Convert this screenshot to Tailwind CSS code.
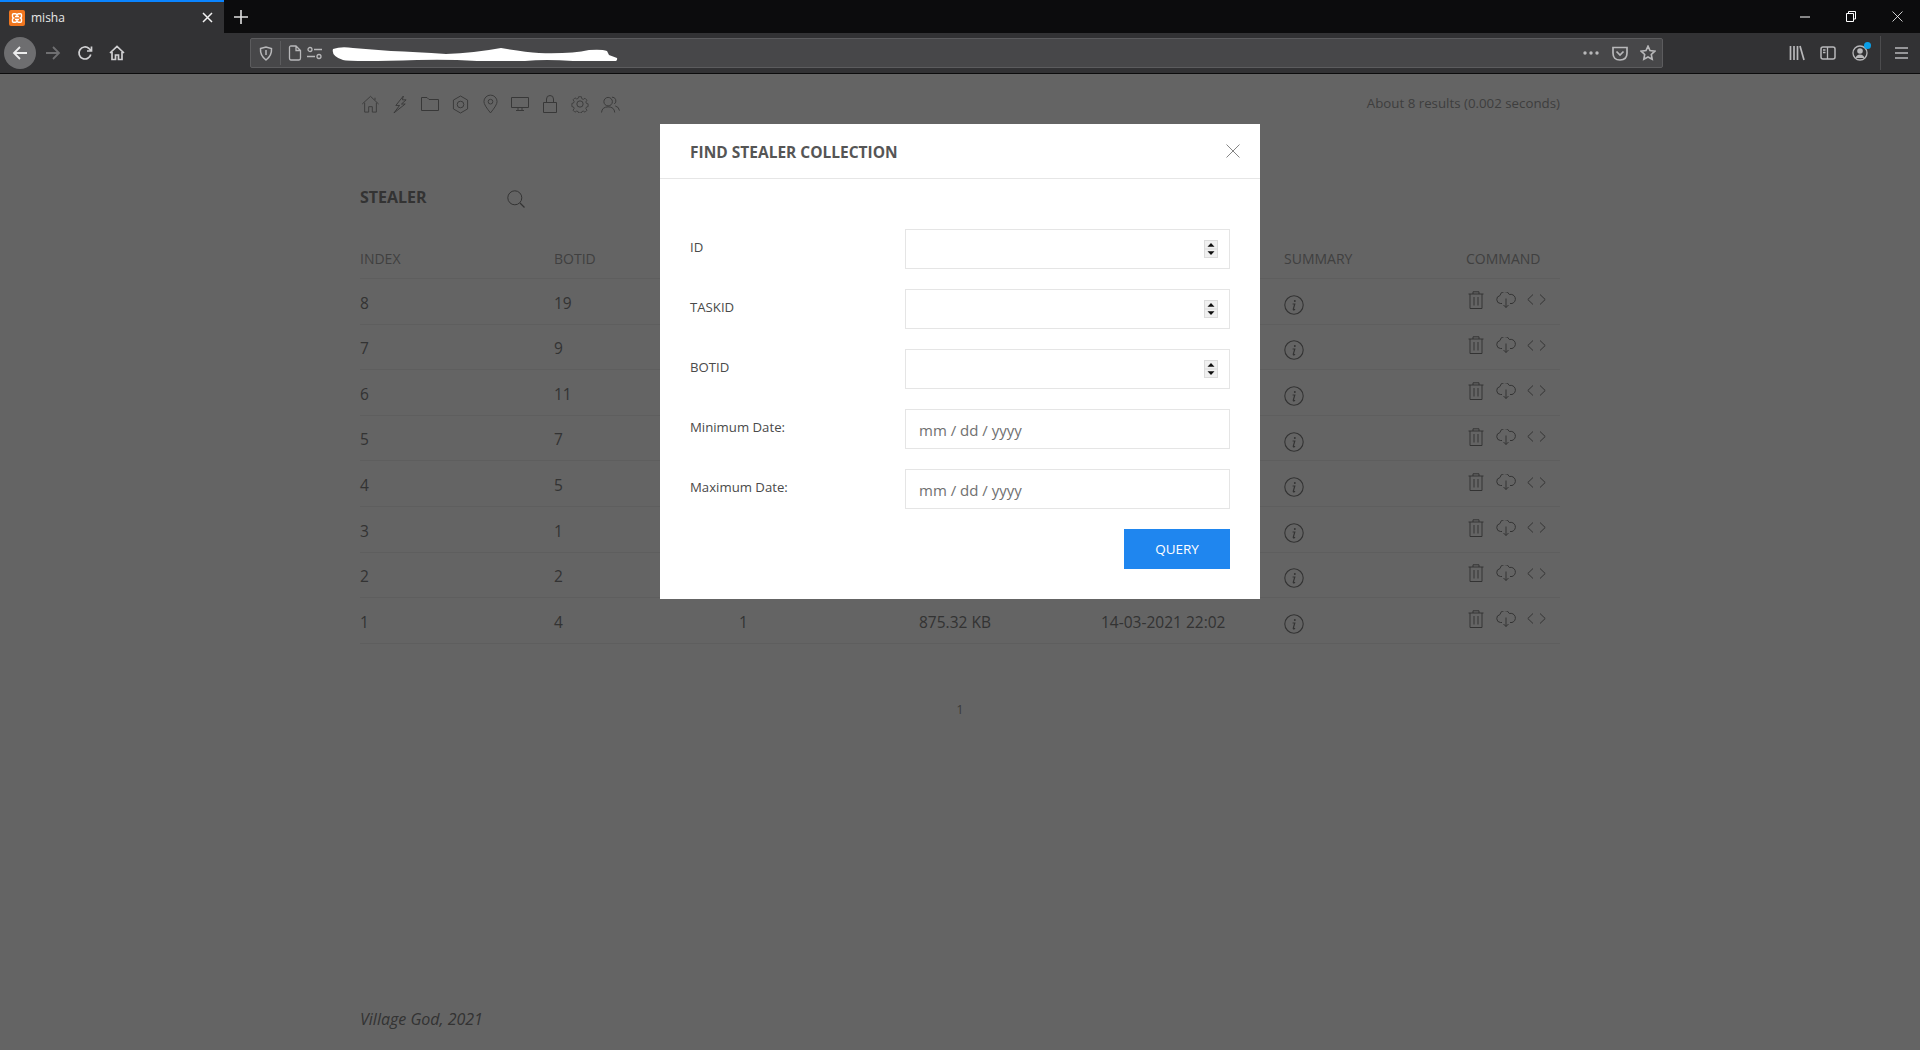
<!DOCTYPE html>
<html lang="en">
<head>
  <meta charset="UTF-8" />
  <title>misha</title>
  <script src="https://cdn.jsdelivr.net/npm/@tailwindcss/browser@4"></script>
</head>
<body class="font-['Open_Sans',sans-serif] overflow-hidden">
  <!-- shared row icons -->
  <svg class="hidden">
    <symbol id="i-info" viewBox="0 0 20 20"><circle cx="10" cy="10" r="9.200" fill="none" stroke="currentColor" stroke-width="1.100"/><circle cx="10.800" cy="5.900" r="1" fill="currentColor"/><path d="M8.600 9h2.200l-1.500 5.200q-.2.900.7.700l1.100-.6" fill="none" stroke="currentColor" stroke-width="1.200"/></symbol>
    <symbol id="i-trash" viewBox="0 0 16 18"><path d="M.5 3h15M5 3V.8h6V3M2 3v14.500h12V3M6 6v8.500M10 6v8.500" fill="none" stroke="currentColor"/></symbol>
    <symbol id="i-cloud" viewBox="0 0 20 16"><path d="M6 11.500H4.500a4 4 0 0 1-.6-7.900 5 5 0 0 1 9.500-1.100 4.500 4.500 0 0 1 2.600 9H14M10 6.500v9M7.500 13l2.500 2.500 2.500-2.500" fill="none" stroke="currentColor"/></symbol>
    <symbol id="i-code" viewBox="0 0 19 11"><path d="M6 .5 .8 5.500 6 10.500M13 .5l5.200 5L13 10.500" fill="none" stroke="currentColor"/></symbol>
    <symbol id="i-spin" viewBox="0 0 14 18"><rect width="14" height="18" fill="#dcdcdc"/><rect x="1" y="1" width="12" height="7.500" fill="#f0f0f0"/><rect x="1" y="9.500" width="12" height="7.500" fill="#f0f0f0"/><path d="M7 3l3.500 3.800h-7zM7 15l3.500-3.800h-7z" fill="#111"/></symbol>
  </svg>

  <div class="flex flex-col h-[1050px] w-[1920px]">
    <!-- browser tab strip -->
    <div class="flex h-[33px] shrink-0 bg-[#0c0c0d] text-white">
      <div class="flex items-center w-[224px] h-[33px] bg-[#323234] border-t-2 border-[#0a84ff] pl-[9px] pr-[11px]">
        <svg class="w-4 h-4 shrink-0" viewBox="0 0 16 16"><rect width="16" height="16" rx="2" fill="#f0761f"/><path d="M4.500 3.800h2q1 0 1.500 1.500.5-1.500 1.500-1.500h2q1 0 1 1v1.700q0 1-1 1.500 1 .5 1 1.500v1.700q0 1-1 1h-2q-1 0-1.500-1.500-.5 1.500-1.500 1.500h-2q-1 0-1-1V9.500q0-1 1-1.500-1-.5-1-1.500V4.800q0-1 1-1zM6 6.500h4M6 9.500h4" fill="none" stroke="#fff" stroke-width="1.400"/></svg>
        <span class="ml-[6px] text-[12px] leading-none text-[#e8e8e8]">misha</span>
        <svg class="w-[11px] h-[11px] ml-auto" viewBox="0 0 11 11"><path d="M1 1l9 9M10 1l-9 9" stroke="#f2f2f2" stroke-width="1.500"/></svg>
      </div>
      <div class="flex items-center justify-center w-[34px]">
        <svg class="w-[14px] h-[14px]" viewBox="0 0 14 14"><path d="M7 0v14M0 7h14" stroke="#e0e0e0" stroke-width="1.600"/></svg>
      </div>
      <div class="flex items-center ml-auto">
        <div class="flex items-center justify-center w-[46px]"><svg class="w-[10px] h-[10px]" viewBox="0 0 10 10"><path d="M0 5h10" stroke="#fff"/></svg></div>
        <div class="flex items-center justify-center w-[46px]"><svg class="w-[10px] h-[11px]" viewBox="0 0 10 11"><path d="M.5 2.500h7v8h-7zM2.500 2.500v-2h7v7.500h-2" fill="none" stroke="#fff"/></svg></div>
        <div class="flex items-center justify-center w-[46px]"><svg class="w-[11px] h-[11px]" viewBox="0 0 11 11"><path d="M.5.500l10 10M10.500.500l-10 10" stroke="#fff" stroke-width=".8"/></svg></div>
      </div>
    </div>

    <!-- browser toolbar -->
    <div class="flex items-center h-[41px] shrink-0 bg-[#323234] border-b border-[#0c0c0d] text-[#b8b8ba] pl-1">
      <div class="flex items-center justify-center w-8 h-8 rounded-full bg-[#6e6e70]">
        <svg class="w-4 h-4" viewBox="0 0 16 16"><path d="M15 8H2M8 2 2 8l6 6" fill="none" stroke="#ededed" stroke-width="1.800"/></svg>
      </div>
      <svg class="w-4 h-4 ml-[9px]" viewBox="0 0 16 16"><path d="M1 8h13M8 2l6 6-6 6" fill="none" stroke="#6f6f71" stroke-width="1.800"/></svg>
      <svg class="w-4 h-4 ml-4" viewBox="0 0 16 16"><path d="M13.800 9.500A6 6 0 1 1 12 3.500l2 2M14.500 1.500v4.500H10" fill="none" stroke="#d0d0d2" stroke-width="1.700"/></svg>
      <svg class="w-4 h-4 ml-4" viewBox="0 0 16 16"><path d="M1 8l7-6.500L15 8M3 7v7.500h3.500V10h3v4.500H13V7" fill="none" stroke="#d0d0d2" stroke-width="1.700"/></svg>
      <!-- url bar -->
      <div class="flex items-center w-[1413px] h-[30px] ml-[125px] pl-[8px] pr-[6px] rounded-[2px] bg-[#474749] border border-[#5c5c5e] shrink-0">
        <svg class="w-[14px] h-[15px]" viewBox="0 0 14 15"><path d="M1.500 2.500 7 1l5.500 1.500q.5 7-5.500 11.500Q1 9.500 1.500 2.500zM7 4v5" fill="none" stroke="currentColor" stroke-width="1.500"/></svg>
        <div class="w-px h-[24px] bg-[#5c5c5e] ml-[7px]"></div>
        <svg class="w-[14px] h-4 ml-[7px]" viewBox="0 0 14 16"><path d="M1.500 2.500q0-1.500 1.500-1.500h5l4.500 4.500V13q0 2-1.500 2H3q-1.500 0-1.500-2zM8 1v4.500h4.500" fill="none" stroke="currentColor" stroke-width="1.300"/></svg>
        <svg class="w-[15px] h-[14px] ml-[5px]" viewBox="0 0 15 14"><circle cx="3" cy="3.500" r="2" fill="none" stroke="currentColor" stroke-width="1.300"/><circle cx="12" cy="10.500" r="2" fill="none" stroke="currentColor" stroke-width="1.300"/><path d="M7 3.500h8M0 10.500h8" stroke="currentColor" stroke-width="1.500"/></svg>
        <!-- redacted address -->
        <svg class="w-[290px] h-[15px] ml-[9px]" viewBox="0 0 290 15"><path d="M2 3Q10 0 22 2L60 5q25 1 55 3 28-1 55-6 24 4 38 5 32 1 50-3 13-1 18 1l2 4 8 3q1 3-4 4-20 1-40-1-28-2-48 0-30 3-48 0-30-2-60-1-30 1-50 1-20 0-24-1Q0 10 2 3z" fill="#fff"/></svg>
        <div class="flex items-center ml-auto">
          <svg class="w-[16px] h-[4px]" viewBox="0 0 16 4"><circle cx="2" cy="2" r="1.700" fill="currentColor"/><circle cx="8" cy="2" r="1.700" fill="currentColor"/><circle cx="14" cy="2" r="1.700" fill="currentColor"/></svg>
          <svg class="w-4 h-[15px] ml-[13px]" viewBox="0 0 16 15"><path d="M1 1.500h14V7q0 7-7 7T1 7zM4.500 5.500 8 9l3.500-3.500" fill="none" stroke="currentColor" stroke-width="1.700"/></svg>
          <svg class="w-4 h-4 ml-[12px]" viewBox="0 0 16 16"><path d="M8 1.200l2 4.400 4.800.6-3.500 3.300.9 4.800L8 12l-4.200 2.300.9-4.800L1.200 6.200 6 5.600z" fill="none" stroke="currentColor" stroke-width="1.600"/></svg>
        </div>
      </div>
      <svg class="w-4 h-4 ml-[126px]" viewBox="0 0 16 16"><path d="M1.500 1v14M5 1v14M8.500 1v14M11 1l4 14" fill="none" stroke="currentColor" stroke-width="1.700"/></svg>
      <svg class="w-4 h-4 ml-[15px]" viewBox="0 0 16 16"><rect x="1" y="2" width="14" height="12" rx="2" fill="none" stroke="currentColor" stroke-width="1.500"/><path d="M7.500 2v12M3 5h2.500M3 7.500h2.500" stroke="currentColor" stroke-width="1.300"/></svg>
      <div class="relative w-4 h-4 ml-4">
        <svg class="w-4 h-4" viewBox="0 0 16 16"><circle cx="8" cy="8" r="7" fill="none" stroke="currentColor" stroke-width="1.300"/><circle cx="8" cy="6" r="2.800" fill="currentColor"/><path d="M3.500 13q1-3.500 4.500-3.500t4.500 3.500" fill="currentColor"/></svg>
        <div class="absolute -top-[3px] -right-[3px] w-[7px] h-[7px] rounded-full bg-[#0a9fe8]"></div>
      </div>
      <div class="w-px h-[34px] bg-[#4c4c4e] ml-[12px]"></div>
      <svg class="w-[13px] h-[12px] ml-[14px]" viewBox="0 0 13 12"><path d="M0 1h13M0 6h13M0 11h13" stroke="currentColor" stroke-width="1.700"/></svg>
    </div>

    <!-- page under the modal backdrop -->
    <div class="relative flex-1 bg-[#fafafa] text-[#808080]">
      <div class="flex flex-col w-[1200px] h-full mx-auto">
        <div class="flex items-center h-[60px] shrink-0">
          <div class="grid grid-cols-[repeat(9,30px)] items-center justify-items-center -ml-[5px] text-[#8c8c8c]">
            <svg class="w-[19px] h-[18px]" viewBox="0 0 20 20"><path d="M.8 10 10 1.500l9 8.500M3.500 8.500V19H8v-6h4v6h4.500V8.500M15 3v2.500" fill="none" stroke="currentColor"/></svg>
            <svg class="w-[15px] h-[19px]" viewBox="0 0 16 20"><path d="M11 1 3 11h4l-6 8 12-9.500H9l5-4.500h-4z" fill="none" stroke="currentColor"/></svg>
            <svg class="w-[18px] h-[14px]" viewBox="0 0 18 14"><path d="M.5.500h5.500l2 2h9.500v11H.5z" fill="none" stroke="currentColor"/></svg>
            <svg class="w-[17px] h-[19px]" viewBox="0 0 18 20"><path d="M9 1l7.500 4.300v9.400L9 19l-7.500-4.300V5.300z" fill="none" stroke="currentColor"/><circle cx="9" cy="10" r="3.500" fill="none" stroke="currentColor"/></svg>
            <svg class="w-[15px] h-[20px]" viewBox="0 0 16 20"><path d="M8 19.500Q1 11 1 7.500a7 7 0 0 1 14 0Q15 11 8 19.500z" fill="none" stroke="currentColor"/><circle cx="8" cy="7.500" r="2.500" fill="none" stroke="currentColor"/></svg>
            <svg class="w-[18px] h-[14px]" viewBox="0 0 18 14"><path d="M.5.500h17v10H.5zM7 10.500v2.500M11 10.500v2.500M5 13.500h8" fill="none" stroke="currentColor"/></svg>
            <svg class="w-[14px] h-[18px]" viewBox="0 0 14 18"><path d="M.5 7.500h13v10H.5zM3.500 7.500V4a3.500 3.500 0 0 1 7 0v3.500" fill="none" stroke="currentColor"/></svg>
            <svg class="w-[18px] h-[18px]" viewBox="0 0 20 20"><path d="M8.300 1h3.400l.5 2.500 1.800.8 2.200-1.400 2.400 2.400-1.400 2.200.8 1.800 2 .5v3.400l-2 .5-.8 1.800 1.400 2.200-2.400 2.400-2.200-1.400-1.800.8-.5 1.500H8.300l-.5-1.500-1.800-.8-2.200 1.400-2.400-2.400 1.400-2.200-.8-1.800-2-.5V9.300l2-.5.8-1.800-1.400-2.200 2.400-2.400L6 3.800l1.800-.8z" transform="translate(1 1) scale(.9)" fill="none" stroke="currentColor"/><circle cx="10" cy="10" r="3.500" fill="none" stroke="currentColor"/></svg>
            <svg class="w-[19px] h-[17px]" viewBox="0 0 20 18"><circle cx="7.500" cy="6" r="4.500" fill="none" stroke="currentColor"/><path d="M.5 17.500q.5-6 7-6t7 6M11.500 1.200a4 4 0 0 1 2.500 7.300M15 10.500q4 1 4.500 5" fill="none" stroke="currentColor"/></svg>
          </div>
          <span class="ml-auto text-[13.3px] text-[#9c9c9c]">About 8 results (0.002 seconds)</span>
        </div>

        <div class="flex items-center h-[46px] mt-[40px] shrink-0">
          <h1 class="w-[147px] text-[16px] font-bold text-[#808080]">STEALER</h1>
          <svg class="w-[18px] h-[18px] mt-[4px]" viewBox="0 0 18 18"><circle cx="7.800" cy="7.800" r="7" fill="none" stroke="currentColor"/><path d="M13 13l4.500 4.500" stroke="currentColor" stroke-width="1.200"/></svg>
        </div>

        <!-- table -->
        <div class="text-[14px]">
          <div class="grid grid-cols-[194px_185px_180px_182px_183px_182px_94px] h-[59px] pt-[29px] border-b border-[#ececec] leading-5 text-[#a0a0a0]">
            <div>INDEX</div><div>BOTID</div><div></div><div></div><div></div><div>SUMMARY</div><div>COMMAND</div>
          </div>
          <div class="grid grid-cols-[194px_185px_180px_182px_183px_182px_94px] items-center h-[45.6px] pt-[4px] border-b border-[#ececec] text-[15.5px]">
            <div>8</div><div>19</div><div></div><div></div><div></div>
            <svg class="w-5 h-5 mt-[3px]"><use href="#i-info"/></svg>
            <div class="flex items-center mb-[7px] ml-[2px]"><svg class="w-4 h-[18px]"><use href="#i-trash"/></svg><svg class="w-5 h-4 ml-3"><use href="#i-cloud"/></svg><svg class="w-[19px] h-[11px] ml-[11px]"><use href="#i-code"/></svg></div>
          </div>
          <div class="grid grid-cols-[194px_185px_180px_182px_183px_182px_94px] items-center h-[45.6px] pt-[4px] border-b border-[#ececec] text-[15.5px]">
            <div>7</div><div>9</div><div></div><div></div><div></div>
            <svg class="w-5 h-5 mt-[3px]"><use href="#i-info"/></svg>
            <div class="flex items-center mb-[7px] ml-[2px]"><svg class="w-4 h-[18px]"><use href="#i-trash"/></svg><svg class="w-5 h-4 ml-3"><use href="#i-cloud"/></svg><svg class="w-[19px] h-[11px] ml-[11px]"><use href="#i-code"/></svg></div>
          </div>
          <div class="grid grid-cols-[194px_185px_180px_182px_183px_182px_94px] items-center h-[45.6px] pt-[4px] border-b border-[#ececec] text-[15.5px]">
            <div>6</div><div>11</div><div></div><div></div><div></div>
            <svg class="w-5 h-5 mt-[3px]"><use href="#i-info"/></svg>
            <div class="flex items-center mb-[7px] ml-[2px]"><svg class="w-4 h-[18px]"><use href="#i-trash"/></svg><svg class="w-5 h-4 ml-3"><use href="#i-cloud"/></svg><svg class="w-[19px] h-[11px] ml-[11px]"><use href="#i-code"/></svg></div>
          </div>
          <div class="grid grid-cols-[194px_185px_180px_182px_183px_182px_94px] items-center h-[45.6px] pt-[4px] border-b border-[#ececec] text-[15.5px]">
            <div>5</div><div>7</div><div></div><div></div><div></div>
            <svg class="w-5 h-5 mt-[3px]"><use href="#i-info"/></svg>
            <div class="flex items-center mb-[7px] ml-[2px]"><svg class="w-4 h-[18px]"><use href="#i-trash"/></svg><svg class="w-5 h-4 ml-3"><use href="#i-cloud"/></svg><svg class="w-[19px] h-[11px] ml-[11px]"><use href="#i-code"/></svg></div>
          </div>
          <div class="grid grid-cols-[194px_185px_180px_182px_183px_182px_94px] items-center h-[45.6px] pt-[4px] border-b border-[#ececec] text-[15.5px]">
            <div>4</div><div>5</div><div></div><div></div><div></div>
            <svg class="w-5 h-5 mt-[3px]"><use href="#i-info"/></svg>
            <div class="flex items-center mb-[7px] ml-[2px]"><svg class="w-4 h-[18px]"><use href="#i-trash"/></svg><svg class="w-5 h-4 ml-3"><use href="#i-cloud"/></svg><svg class="w-[19px] h-[11px] ml-[11px]"><use href="#i-code"/></svg></div>
          </div>
          <div class="grid grid-cols-[194px_185px_180px_182px_183px_182px_94px] items-center h-[45.6px] pt-[4px] border-b border-[#ececec] text-[15.5px]">
            <div>3</div><div>1</div><div></div><div></div><div></div>
            <svg class="w-5 h-5 mt-[3px]"><use href="#i-info"/></svg>
            <div class="flex items-center mb-[7px] ml-[2px]"><svg class="w-4 h-[18px]"><use href="#i-trash"/></svg><svg class="w-5 h-4 ml-3"><use href="#i-cloud"/></svg><svg class="w-[19px] h-[11px] ml-[11px]"><use href="#i-code"/></svg></div>
          </div>
          <div class="grid grid-cols-[194px_185px_180px_182px_183px_182px_94px] items-center h-[45.6px] pt-[4px] border-b border-[#ececec] text-[15.5px]">
            <div>2</div><div>2</div><div></div><div></div><div></div>
            <svg class="w-5 h-5 mt-[3px]"><use href="#i-info"/></svg>
            <div class="flex items-center mb-[7px] ml-[2px]"><svg class="w-4 h-[18px]"><use href="#i-trash"/></svg><svg class="w-5 h-4 ml-3"><use href="#i-cloud"/></svg><svg class="w-[19px] h-[11px] ml-[11px]"><use href="#i-code"/></svg></div>
          </div>
          <div class="grid grid-cols-[194px_185px_180px_182px_183px_182px_94px] items-center h-[45.6px] pt-[4px] border-b border-[#ececec] text-[15.5px]">
            <div>1</div><div>4</div><div>1</div><div>875.32 KB</div><div>14-03-2021 22:02</div>
            <svg class="w-5 h-5 mt-[3px]"><use href="#i-info"/></svg>
            <div class="flex items-center mb-[7px] ml-[2px]"><svg class="w-4 h-[18px]"><use href="#i-trash"/></svg><svg class="w-5 h-4 ml-3"><use href="#i-cloud"/></svg><svg class="w-[19px] h-[11px] ml-[11px]"><use href="#i-code"/></svg></div>
          </div>
        </div>

        <div class="mt-[56px] text-center text-[12px] leading-5 text-[#909090]">1</div>
        <div class="mt-auto pb-[21px] text-[16px] italic leading-5">Village God, 2021</div>
      </div>

      <!-- backdrop -->
      <div class="absolute inset-0 bg-black/60"></div>

      <!-- modal -->
      <div class="absolute left-[660px] top-[50px] w-[600px] h-[475px] bg-white text-[#555]">
        <div class="flex items-center justify-between h-[55px] pl-[30px] pr-[20px] border-b border-[#e6e6e6]">
          <h2 class="text-[15.5px] font-bold leading-none mt-[3px]">FIND STEALER COLLECTION</h2>
          <svg class="w-[14px] h-[14px] -mt-px" viewBox="0 0 14 14"><path d="M.5.500l13 13M13.500.500l-13 13" stroke="#777" stroke-width=".9"/></svg>
        </div>
        <div class="flex flex-col px-[30px] pt-[50px]">
          <div class="flex h-[40px] mb-[20px]">
            <label class="w-[215px] text-[13.2px] leading-[36px] text-[#4a4a4a]">ID</label>
            <div class="flex items-center justify-end flex-1 pr-[11px] border border-[#e5e5e5]">
              <svg class="w-[14px] h-[18px]"><use href="#i-spin"/></svg>
            </div>
          </div>
          <div class="flex h-[40px] mb-[20px]">
            <label class="w-[215px] text-[13.2px] leading-[36px] text-[#4a4a4a]">TASKID</label>
            <div class="flex items-center justify-end flex-1 pr-[11px] border border-[#e5e5e5]">
              <svg class="w-[14px] h-[18px]"><use href="#i-spin"/></svg>
            </div>
          </div>
          <div class="flex h-[40px] mb-[20px]">
            <label class="w-[215px] text-[13.2px] leading-[36px] text-[#4a4a4a]">BOTID</label>
            <div class="flex items-center justify-end flex-1 pr-[11px] border border-[#e5e5e5]">
              <svg class="w-[14px] h-[18px]"><use href="#i-spin"/></svg>
            </div>
          </div>
          <div class="flex h-[40px] mb-[20px]">
            <label class="w-[215px] text-[13.2px] leading-[36px] text-[#4a4a4a]">Minimum Date:</label>
            <div class="flex items-center flex-1 pl-[13px] pt-[3px] border border-[#e5e5e5] text-[15px] text-[#707070]">mm / dd / yyyy</div>
          </div>
          <div class="flex h-[40px] mb-[20px]">
            <label class="w-[215px] text-[13.2px] leading-[36px] text-[#4a4a4a]">Maximum Date:</label>
            <div class="flex items-center flex-1 pl-[13px] pt-[3px] border border-[#e5e5e5] text-[15px] text-[#707070]">mm / dd / yyyy</div>
          </div>
          <button class="self-end w-[106px] h-[40px] bg-[#1f86ef] text-white text-[13.5px]">QUERY</button>
        </div>
      </div>
    </div>
  </div>
</body>
</html>
